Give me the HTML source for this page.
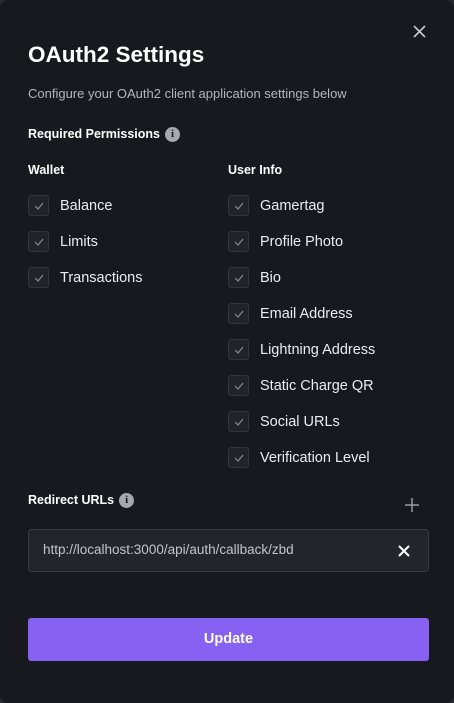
<!DOCTYPE html><html><head><style>
body{margin:0;width:454px;height:703px;background:#2a2a30;font-family:"Liberation Sans",sans-serif;overflow:hidden}
.m{position:absolute;left:0;top:0;width:454px;height:703px;background:#18181f;border-radius:8px;color:#fff}
.a{position:absolute;white-space:nowrap}
.f{display:flex;align-items:center;line-height:15px}
.cb{position:absolute;width:19px;height:19px;border:1px solid #34343d;background:#22222a;border-radius:3px}
.cb svg{position:absolute;left:5px;top:5px}
.lb{position:absolute;font-size:14.5px;color:#ececf0}
.i{display:inline-block;width:15px;height:15px;border-radius:50%;background:#a7a7ad;color:#18181f;font-size:11px;font-weight:bold;text-align:center;line-height:15px;margin-left:5px;font-family:"Liberation Serif",serif}
</style></head><body><div class="m">
<svg class="a" style="left:413px;top:25px" width="13" height="13"><path d="M1 1L12 12M12 1L1 12" stroke="#c8c8cc" stroke-width="1.6"/></svg>
<div class="a" style="left:28px;top:42px;font-size:22.5px;font-weight:bold">OAuth2 Settings</div>
<div class="a" style="left:28px;top:86px;font-size:13px;color:#b4b4bb">Configure your OAuth2 client application settings below</div>
<div class="a f" style="left:28px;top:127px;font-size:12.5px;font-weight:bold">Required Permissions<span class="i">i</span></div>
<div class="a" style="left:28px;top:163px;font-size:12.5px;font-weight:bold">Wallet</div>
<div class="a" style="left:228px;top:163px;font-size:12.5px;font-weight:bold">User Info</div>
<div id="c"></div>
<div class="a f" style="left:28px;top:493px;font-size:12.5px;font-weight:bold">Redirect URLs<span class="i">i</span></div>
<svg class="a" style="left:405px;top:498px" width="14" height="14"><path d="M7 0V14M0 7H14" stroke="#9a9aa0" stroke-width="1.5"/></svg>
<div class="a" style="left:28px;top:529px;width:399px;height:41px;border:1px solid #3a3a44;background:#24242c;border-radius:3px"></div>
<div class="a" style="left:43px;top:542px;font-size:13.5px;color:#c4c4ca">http://localhost:3000/api/auth/callback/zbd</div>
<svg class="a" style="left:398px;top:545px" width="12" height="12"><path d="M1 1L11 11M11 1L1 11" stroke="#fff" stroke-width="2"/></svg>
<div class="a" style="left:28px;top:618px;width:401px;height:43px;background:#8661f2;border-radius:3px;font-size:14.5px;font-weight:bold;text-align:center;line-height:43px">Update</div>
</div>
<script>
var h='',L=['Balance','Limits','Transactions'],R=['Gamertag','Profile Photo','Bio','Email Address','Lightning Address','Static Charge QR','Social URLs','Verification Level'];
var ck='<svg width="10" height="9"><path d="M1 5L4 8L9 2" stroke="#8a8a92" stroke-width="1.2" fill="none"/></svg>';
function add(x,t,i){var y=195+i*36;h+='<div class="cb" style="left:'+x+'px;top:'+y+'px">'+ck+'</div><div class="lb" style="left:'+(x+32)+'px;top:'+(y+3)+'px">'+t+'</div>';}
L.forEach(function(t,i){add(28,t,i)});R.forEach(function(t,i){add(228,t,i)});
document.getElementById('c').innerHTML=h;
</script>
</body></html>
